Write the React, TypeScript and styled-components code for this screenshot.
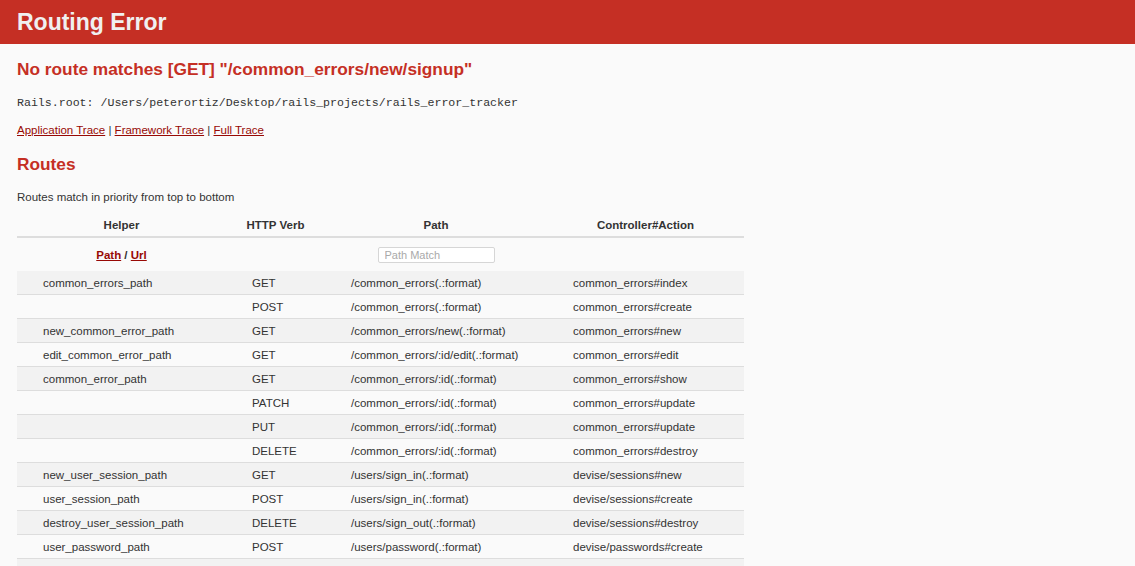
import styled, { createGlobalStyle } from 'styled-components';

const GlobalStyle = createGlobalStyle`
    html, body {
        margin: 0;
        overflow: hidden;
    }
    body {
        background-color: #fafafa;
        color: #333;
        font-family: 'Liberation Sans', Helvetica, Arial, sans-serif;
        font-size: 11.5px;
        line-height: 16px;
    }
`;

const Header = styled.header`
    height: 44px;
    padding: 0 17px;
    background: #c52f24;
    color: #f0f0f0;
`;

const Title = styled.h1`
    margin: 0;
    font-size: 23px;
    line-height: 44px;
    font-weight: bold;
`;

const Container = styled.div`
    padding: 0 17px;
`;

const Heading = styled.h2<{ $top: number }>`
    margin: ${props => props.$top}px 0 0;
    color: #c52f24;
    font-size: 17.3px;
    line-height: 22px;
    font-weight: bold;
`;

const RootLine = styled.pre`
    margin: 15px 0 0;
    font-family: 'Liberation Mono', Courier, monospace;
    font-size: 11.6px;
    line-height: 16px;
    color: #333;
`;

const TraceLinks = styled.p`
    margin: 11px 0 0;
`;

const Link = styled.a`
    color: #980905;
    text-decoration: underline;
`;

const Note = styled.p`
    margin: 14px 0 0;
`;

const RouteTable = styled.table`
    margin-top: 9px;
    width: 727px;
    border-collapse: collapse;
    table-layout: fixed;

    tbody tr {
        border-bottom: 1px solid #ddd;
    }
    tbody tr:nth-child(odd) {
        background: #f2f2f2;
    }
`;

const TitleRow = styled.tr`
    border-bottom: 2px solid #ddd;
`;

const HeadCell = styled.th`
    padding: 0;
    height: 22px;
    line-height: 22px;
    font-weight: bold;
    text-align: center;
`;

const FilterCell = styled.th`
    padding: 0;
    height: 33px;
    text-align: center;
    font-weight: bold;
`;

const SearchInput = styled.input`
    box-sizing: border-box;
    width: 117px;
    height: 16px;
    padding: 0 6px;
    border: 1px solid #d6d6d6;
    border-radius: 2px;
    background: #fff;
    font-family: inherit;
    font-size: 11px;
    vertical-align: middle;
    &::placeholder {
        color: #a9a9a9;
    }
`;

const Cell = styled.td`
    padding: 0 26px;
    height: 23px;
    white-space: nowrap;
`;

const routes = [
    ['common_errors_path', 'GET', '/common_errors(.:format)', 'common_errors#index'],
    ['', 'POST', '/common_errors(.:format)', 'common_errors#create'],
    ['new_common_error_path', 'GET', '/common_errors/new(.:format)', 'common_errors#new'],
    ['edit_common_error_path', 'GET', '/common_errors/:id/edit(.:format)', 'common_errors#edit'],
    ['common_error_path', 'GET', '/common_errors/:id(.:format)', 'common_errors#show'],
    ['', 'PATCH', '/common_errors/:id(.:format)', 'common_errors#update'],
    ['', 'PUT', '/common_errors/:id(.:format)', 'common_errors#update'],
    ['', 'DELETE', '/common_errors/:id(.:format)', 'common_errors#destroy'],
    ['new_user_session_path', 'GET', '/users/sign_in(.:format)', 'devise/sessions#new'],
    ['user_session_path', 'POST', '/users/sign_in(.:format)', 'devise/sessions#create'],
    ['destroy_user_session_path', 'DELETE', '/users/sign_out(.:format)', 'devise/sessions#destroy'],
    ['user_password_path', 'POST', '/users/password(.:format)', 'devise/passwords#create'],
    // next row only peeks in at the bottom edge of the window
    ['', '', '', ''],
];

const App = () => (
    <>
        <GlobalStyle />
        <Header>
            <Title>Routing Error</Title>
        </Header>
        <Container>
            <Heading $top={14}>No route matches [GET] "/common_errors/new/signup"</Heading>
            <RootLine>Rails.root: /Users/peterortiz/Desktop/rails_projects/rails_error_tracker</RootLine>
            <TraceLinks>
                <Link href='#'>Application Trace</Link> | <Link href='#'>Framework Trace</Link> |{' '}
                <Link href='#'>Full Trace</Link>
            </TraceLinks>
            <Heading $top={15}>Routes</Heading>
            <Note>Routes match in priority from top to bottom</Note>
            <RouteTable>
                <colgroup>
                    <col style={{ width: 209 }} />
                    <col style={{ width: 99 }} />
                    <col style={{ width: 222 }} />
                    <col style={{ width: 197 }} />
                </colgroup>
                <thead>
                    <TitleRow>
                        <HeadCell>Helper</HeadCell>
                        <HeadCell>HTTP Verb</HeadCell>
                        <HeadCell>Path</HeadCell>
                        <HeadCell>Controller#Action</HeadCell>
                    </TitleRow>
                    <tr>
                        <FilterCell>
                            <Link href='#'>Path</Link> / <Link href='#'>Url</Link>
                        </FilterCell>
                        <FilterCell />
                        <FilterCell>
                            <SearchInput placeholder='Path Match' />
                        </FilterCell>
                        <FilterCell />
                    </tr>
                </thead>
                <tbody>
                    {routes.map((r, i) => (
                        <tr key={i}>
                            <Cell>{r[0]}</Cell>
                            <Cell>{r[1]}</Cell>
                            <Cell>{r[2]}</Cell>
                            <Cell>{r[3]}</Cell>
                        </tr>
                    ))}
                </tbody>
            </RouteTable>
        </Container>
    </>
);

export default App;
